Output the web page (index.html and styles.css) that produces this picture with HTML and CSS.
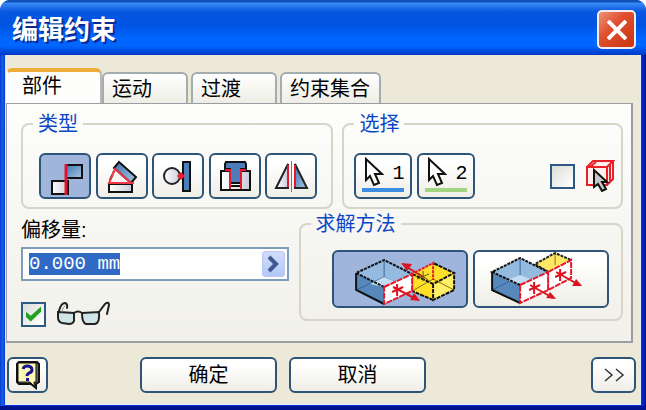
FILE: index.html
```html
<!DOCTYPE html>
<html lang="zh-CN">
<head>
  <meta charset="UTF-8">
  <meta name="viewport" content="width=device-width, initial-scale=1.0">
  <title>编辑约束</title>
  <link rel="stylesheet" href="styles.css">
</head>
<body>
  <svg width="0" height="0" class="defs" aria-hidden="true">
    <defs>
      <linearGradient id="blue" x1="0" y1="0" x2="1" y2="1">
        <stop offset="0" stop-color="#3f76b4"/>
        <stop offset="1" stop-color="#a9c6e3"/>
      </linearGradient>
      <linearGradient id="grey" x1="0" y1="0" x2="1" y2="0">
        <stop offset="0" stop-color="#ffffff"/>
        <stop offset="1" stop-color="#c9cdda"/>
      </linearGradient>
    </defs>
  </svg>

  <main class="window">
    <header class="titlebar">
      <h1>编辑约束</h1>
      <button class="close" aria-label="关闭">
        <svg width="20" height="20" viewBox="0 0 20 20"><path d="M1 1L19 19M19 1L1 19" stroke="#fff" stroke-width="4"/></svg>
      </button>
    </header>

    <div class="client">
      <div class="tabs" role="tablist">
        <button class="tab active" role="tab" aria-selected="true">部件</button>
        <button class="tab" role="tab">运动</button>
        <button class="tab" role="tab">过渡</button>
        <button class="tab tab-wide" role="tab">约束集合</button>
      </div>

      <div class="panel" role="tabpanel">
        <div class="row row-top">
          <fieldset class="group">
            <legend>类型</legend>
            <div class="types">
              <button class="btn tool pressed" aria-label="配合">
                <svg viewBox="2 2 48 42">
                  <rect x="27" y="12" width="16" height="13" fill="url(#blue)" stroke="#111" stroke-width="2"/>
                  <rect x="13" y="28" width="16" height="13" fill="url(#grey)" stroke="#111" stroke-width="2"/>
                  <path d="M27 11V42" stroke="#e0142c" stroke-width="3"/>
                </svg>
              </button>
              <button class="btn tool" aria-label="角度">
                <svg viewBox="2 2 48 42">
                  <rect x="13" y="31" width="23" height="8" fill="url(#grey)" stroke="#111" stroke-width="2"/>
                  <path d="M23 9L40 24L35 30L18 15Z" fill="url(#blue)" stroke="#111" stroke-width="2"/>
                  <path d="M14 27L18 18" stroke="#111" stroke-width="2" stroke-dasharray="6 2"/>
                  <path d="M38 30H13L19 16L35 30" fill="none" stroke="#ee3a48" stroke-width="2"/>
                </svg>
              </button>
              <button class="btn tool" aria-label="相切">
                <svg viewBox="2 2 48 42">
                  <circle cx="20" cy="23" r="8" fill="url(#grey)" stroke="#222" stroke-width="2"/>
                  <rect x="31" y="9" width="7" height="29" fill="#4c80bb" stroke="#111" stroke-width="2"/>
                  <path d="M25 23L29 19L33 23L29 27Z" fill="#ee1c2c"/>
                </svg>
              </button>
              <button class="btn tool" aria-label="插入">
                <svg viewBox="2 2 48 42">
                  <path d="M12 18H21V33H32V18H41V37H12Z" fill="url(#grey)" stroke="#111" stroke-width="2"/>
                  <path d="M21 18V37M32 18V37" stroke="#111" stroke-width="2"/>
                  <path d="M17 9H36L37 11V16H32V30H21V16H16V11Z" fill="#4c7db8" stroke="#111" stroke-width="2"/>
                  <path d="M16 17H21V36M37 17H32V36" fill="none" stroke="#e5182c" stroke-width="2"/>
                </svg>
              </button>
              <button class="btn tool" aria-label="对称">
                <svg viewBox="2 2 48 42">
                  <path d="M23 11V35H11Z" fill="url(#grey)" stroke="#222" stroke-width="2"/>
                  <path d="M30 11V35H42Z" fill="url(#blue)" stroke="#222" stroke-width="2"/>
                  <path d="M23 12V34M30 12V34" stroke="#e5182c" stroke-width="2"/>
                  <path d="M26.500 8V39" stroke="#777" stroke-width="1"/>
                </svg>
              </button>
            </div>
          </fieldset>

          <fieldset class="group">
            <legend>选择</legend>
            <div class="picks">
              <button class="btn pick pick-first">
                <svg width="20" height="30" viewBox="0 0 20 30"><path d="M2 2V23L6 19L10 28L15 26L11 17H18Z" fill="#fff" stroke="#111" stroke-width="2"/></svg>
                <span>1</span>
              </button>
              <button class="btn pick pick-second">
                <svg width="20" height="30" viewBox="0 0 20 30"><path d="M2 2V23L6 19L10 28L15 26L11 17H18Z" fill="#fff" stroke="#111" stroke-width="2"/></svg>
                <span>2</span>
              </button>
              <label class="check part-first">
                <input type="checkbox" aria-label="先拾取零件">
                <svg width="30" height="34" viewBox="0 0 30 34">
                  <path d="M2 8L8 2H28V20L22 26H2Z" fill="#fff0ee"/>
                  <path d="M2 8H22V26H2ZM2 8L8 2H28L22 8M28 2V20L22 26M5 8L11 3M25 5V22" fill="none" stroke="#ea2028" stroke-width="2"/>
                  <path d="M9 11V28L13 25L17 32L21 30L17 23H22Z" fill="#c8c8c8" stroke="#111" stroke-width="2"/>
                </svg>
              </label>
            </div>
          </fieldset>
        </div>

        <div class="row row-bottom">
          <div class="offset">
            <label for="offset">偏移量:</label>
            <div class="field">
              <input id="offset" type="text" value="0.000 mm" autofocus>
              <button aria-label="更多">
                <svg width="14" height="18" viewBox="0 0 14 18"><path d="M3 2L10 9L3 16" fill="none" stroke="#405892" stroke-width="4"/></svg>
              </button>
            </div>
            <label class="check preview">
              <input type="checkbox" checked aria-label="显示预览">
              <svg width="54" height="26" viewBox="0 0 54 26" fill="none" stroke="#222" stroke-width="2" stroke-linecap="round">
                <path d="M2 11L18 12V20Q17 23 13 23L6 22Q2 21 2 16Z" fill="#cfe5e8"/>
                <path d="M26 12L43 11Q44 22 39 23L30 23Q26 22 26 12Z" fill="#cfe5e8"/>
                <path d="M18 12Q22 9 26 12M3 10Q5 2 9 2Q12 3 11 7M43 11L49 3Q53 0 53 4L51 13"/>
                <path d="M6 11Q7 5 9 5" stroke="#888" stroke-width="1"/>
              </svg>
            </label>
          </div>

          <fieldset class="group">
            <legend>求解方法</legend>
            <div class="methods">
              <button class="btn method pressed" aria-label="配合">
                <svg viewBox="2 2 132 54">
                  <path d="M24 23L52 10L80 24L52 37Z" fill="#94bbdf"/>
                  <path d="M24 23L52 37V54L24 40Z" fill="#5688bc"/>
                  <path d="M52 10V27L24 40M52 27L80 40" fill="none" stroke="#38689a" stroke-width="1"/>
                  <path d="M38 34L52 27L64 32L52 37Z" fill="#c4dcf1"/>
                  <path d="M52 37L24 23L52 10L80 24" fill="none" stroke="#111" stroke-width="2" stroke-dasharray="3 1"/>
                  <path d="M24 23V40L52 54" fill="none" stroke="#111" stroke-width="2"/>
                  <path d="M80 24L101 13L122 23V40L101 50L80 41Z" fill="#ffe12b"/>
                  <path d="M101 34L122 23V40L101 50Z" fill="#ffef66"/>
                  <path d="M80 41L101 29L122 40" fill="none" stroke="#8a7410" stroke-width="1"/>
                  <path d="M80 24L101 34L122 23L101 13M101 34V50L122 40V23M101 50L80 41" fill="none" stroke="#111" stroke-width="2" stroke-dasharray="4 1"/>
                  <path d="M80 41V24L101 13V30" fill="none" stroke="#e5182c" stroke-width="2" stroke-dasharray="3 1"/>
                  <path d="M52 37L80 24V41L52 54Z" fill="#fff" stroke="#e5182c" stroke-width="2" stroke-dasharray="6 1"/>
                  <path d="M65 34V46M60 42L71 37M61 37L84 49M73 16L91 27" stroke="#dd1320" stroke-width="2"/>
                  <path d="M88 51L78 50L82 43ZM69 13L80 14L75 21Z" fill="#dd1320"/>
                  <path d="M91 21V31M85 29L97 24M86 23L96 30" stroke="#635617" stroke-width="1"/>
                </svg>
              </button>
              <button class="btn method" aria-label="表面齐平">
                <svg viewBox="2 2 132 54">
                  <path d="M62 14L82 3L98 10L75 22Z" fill="#ffe964"/>
                  <path d="M82 3V15" stroke="#8a7410" stroke-width="1"/>
                  <path d="M75 22L62 14L82 3L98 10" fill="none" stroke="#222" stroke-width="2" stroke-dasharray="3 1"/>
                  <path d="M19 22L47 8L75 22L47 35Z" fill="#94bbdf"/>
                  <path d="M19 22L47 35V53L19 40Z" fill="#5688bc"/>
                  <path d="M47 8V26L19 40M47 26L75 40" fill="none" stroke="#38689a" stroke-width="1"/>
                  <path d="M34 30L47 25L59 30L47 35Z" fill="#c4dcf1"/>
                  <path d="M47 35L19 22L47 8L75 22" fill="none" stroke="#111" stroke-width="2" stroke-dasharray="3 1"/>
                  <path d="M19 22V40L47 53" fill="none" stroke="#111" stroke-width="2"/>
                  <path d="M47 35L75 22V40L47 53ZM75 22L98 10V28L75 40Z" fill="#fff" stroke="#e5182c" stroke-width="2" stroke-dasharray="6 1"/>
                  <path d="M61 32V44M56 40L67 35M57 35L80 48M87 19V31M82 27L93 22M83 22L106 35" stroke="#dd1320" stroke-width="2"/>
                  <path d="M83 49L73 48L77 42ZM109 36L99 36L103 29Z" fill="#dd1320"/>
                </svg>
              </button>
            </div>
          </fieldset>
        </div>
      </div>

      <footer class="actions">
        <button class="btn help" aria-label="帮助">
          <svg width="28" height="30" viewBox="0 0 28 30">
            <path d="M5 2H23L25 4V22L22 24V28L17 24H5L3 22V4Z" fill="#6c6a58" stroke="#111" stroke-width="2"/>
            <path d="M4 3H22V22H20V26L16 22H4Z" fill="#fff9b8" stroke="#111" stroke-width="1"/>
            <path d="M9 9Q10 6 13 6Q18 6 18 10Q18 12 15 13Q13 14 13 16" fill="none" stroke="#17178c" stroke-width="3"/>
            <rect x="12" y="18" width="3" height="3" fill="#17178c"/>
          </svg>
        </button>
        <div class="confirm">
          <button class="btn">确定</button>
          <button class="btn">取消</button>
        </div>
        <button class="btn more" aria-label="展开">
          <svg width="22" height="16" viewBox="0 0 22 16"><path d="M2 2L9 8L2 14M13 2L20 8L13 14" fill="none" stroke="#333" stroke-width="1.500"/></svg>
        </button>
      </footer>
    </div>
  </main>

  <script>
    document.getElementById("offset").focus();
    document.getElementById("offset").select();
  </script>
</body>
</html>
```
FILE: styles.css
```css
* {
  box-sizing: border-box;
}

body {
  margin: 0;
  background-color: #fff;
  color: #000;
  font-family: "Liberation Sans", "Noto Sans CJK SC", sans-serif;
  font-size: 20px;
  line-height: 22px;
}

button, input {
  font: inherit;
  color: inherit;
  margin: 0;
  padding: 0;
}

svg {
  display: block;
}

.defs {
  position: absolute;
}

.window {
  min-height: 100vh;
  display: flex;
  flex-direction: column;
  padding: 0 5px 5px;
  border-radius: 10px 10px 0 0;
  background: linear-gradient(to right, #0a3fd0 0, #1660ee 3px, #0831d9 5px, #0831d9 calc(100% - 5px), #00138c 100%);
  box-shadow: inset 0 -4px #00138c;
  overflow: hidden;
}

/* title bar */
.titlebar {
  display: flex;
  align-items: center;
  justify-content: space-between;
  height: 55px;
  margin: 0 -5px;
  padding: 4px 10px 0 12px;
  background: linear-gradient(#0c50b8 0, #0c50b8 2px, #3c8cf8 3px, #2a78ee 6px, #0656e0 12px, #0054e3 26px, #0066ff 38px, #0066ff 46px, #0048d8 52px, #0038c0 55px);
}

.titlebar h1 {
  margin: 0;
  color: #fff;
  font-size: 26px;
  line-height: 32px;
  text-shadow: 2px 2px #0a2a90;
}

.close {
  display: flex;
  align-items: center;
  justify-content: center;
  width: 39px;
  height: 39px;
  border: 2px solid #f4ecf0;
  border-radius: 5px;
  background: linear-gradient(135deg, #ee9276, #e05030 40%, #c8340c);
}

.client {
  flex: 1;
  display: flex;
  flex-direction: column;
  padding: 13px 4px 11px 1px;
  border: solid #e8ecff;
  border-width: 0 1px 1px 0;
  background-color: #ece9d8;
}

/* tabs */
.tabs {
  display: flex;
  align-items: flex-end;
  gap: 3px;
}

.tab {
  width: 86px;
  height: 31px;
  padding-left: 8px;
  border: 2px solid #a3acae;
  border-bottom: 0;
  border-radius: 6px 6px 0 0;
  background: linear-gradient(#fff, #eeede5);
  text-align: left;
}

.tab.active {
  width: 96px;
  height: 35px;
  margin-right: -3px;
  padding: 0 0 4px 14px;
  border-color: #b4bab8;
  border-top: 4px solid #f0ac38;
  border-left-color: #fff;
  background: #fdfdfc;
}

.tab-wide {
  width: 101px;
}

.panel {
  margin-right: 3px;
  padding: 9px 8px 14px 14px;
  border: solid #9a9da2;
  border-width: 1px 2px 2px 1px;
  background: linear-gradient(#fdfdfc, #f1f0ea);
}

.row {
  display: grid;
}

.row-top {
  grid-template-columns: 313fr 281fr;
  gap: 9px;
}

.row-bottom {
  grid-template-columns: 268fr 325fr;
  align-items: start;
  gap: 10px;
  margin-top: 4px;
}

.group {
  min-width: 0;
  margin: 0;
  padding: 0;
  border: 2px solid #d6d5c8;
  border-radius: 8px;
}

.group legend {
  margin-left: 10px;
  padding: 0 5px;
  color: #0b46c8;
}

/* buttons */
.btn {
  border: 2px solid #2e5578;
  border-radius: 6px;
  background: linear-gradient(#fff 20%, #eeede6);
}

.btn.pressed {
  background: #9fb5dc;
}

.types {
  display: flex;
  justify-content: space-between;
  padding: 18px 14px 8px 16px;
}

.tool {
  width: 52px;
  height: 46px;
}

.tool svg, .method svg {
  width: 100%;
  height: 100%;
}

.picks {
  display: flex;
  align-items: center;
  gap: 5px;
  padding: 18px 6px 8px 10px;
}

.pick {
  display: flex;
  justify-content: space-between;
  width: 58px;
  height: 46px;
  padding: 2px 6px 0 8px;
  background: linear-gradient(#3b8ee0, #3b8ee0) center 33px / 42px 4px no-repeat, linear-gradient(#fff 20%, #eeede6);
  font-family: "Liberation Mono", monospace;
  line-height: 34px;
}

.pick-second {
  background: linear-gradient(#9fd582, #9fd582) center 33px / 42px 4px no-repeat, linear-gradient(#fff 20%, #eeede6);
}

.check {
  display: flex;
  align-items: center;
  gap: 10px;
}

.check input {
  appearance: none;
  width: 25px;
  height: 25px;
  border: 2px solid #2c5a82;
  background: linear-gradient(135deg, #dcdcd8, #fff);
}

.check input:checked {
  display: grid;
  place-items: center;
}

.check input:checked::before {
  content: "";
  width: 15px;
  height: 15px;
  background: #21a121;
  clip-path: polygon(0 35%, 32% 62%, 100% 0, 100% 35%, 32% 100%, 0 70%);
}

.part-first {
  margin-left: auto;
}

/* offset value */
.offset {
  min-width: 0;
  padding-top: 6px;
}

.field {
  display: flex;
  height: 34px;
  margin-top: 6px;
  padding: 2px;
  border: 2px solid #7f9db9;
  background: #fff;
}

.field input {
  flex: 1;
  min-width: 0;
  padding-left: 4px;
  border: 0;
  outline: 0;
  background: none;
  font-family: "Liberation Mono", monospace;
  font-size: 19px;
}

.field input::selection {
  background: #316ac5;
  color: #fff;
}

.field button {
  display: flex;
  align-items: center;
  justify-content: center;
  width: 23px;
  border: 1px solid #b8c8f0;
  border-radius: 3px;
  background: linear-gradient(#d0dcfc, #b4c8f6);
}

.preview {
  margin-top: 20px;
}

.methods {
  display: grid;
  grid-template-columns: 1fr 1fr;
  gap: 5px;
  padding: 15px 12px 11px 31px;
}

.method {
  height: 58px;
}

/* footer */
.actions {
  display: flex;
  margin-top: auto;
  padding-left: 1px;
}

.actions .btn {
  height: 36px;
}

.confirm {
  flex: 1;
  display: flex;
  justify-content: center;
  gap: 12px;
  padding-right: 73px;
}

.confirm .btn {
  width: 137px;
}

.help, .more {
  display: flex;
  align-items: center;
  justify-content: center;
  width: 41px;
}

.more {
  width: 45px;
}
```
